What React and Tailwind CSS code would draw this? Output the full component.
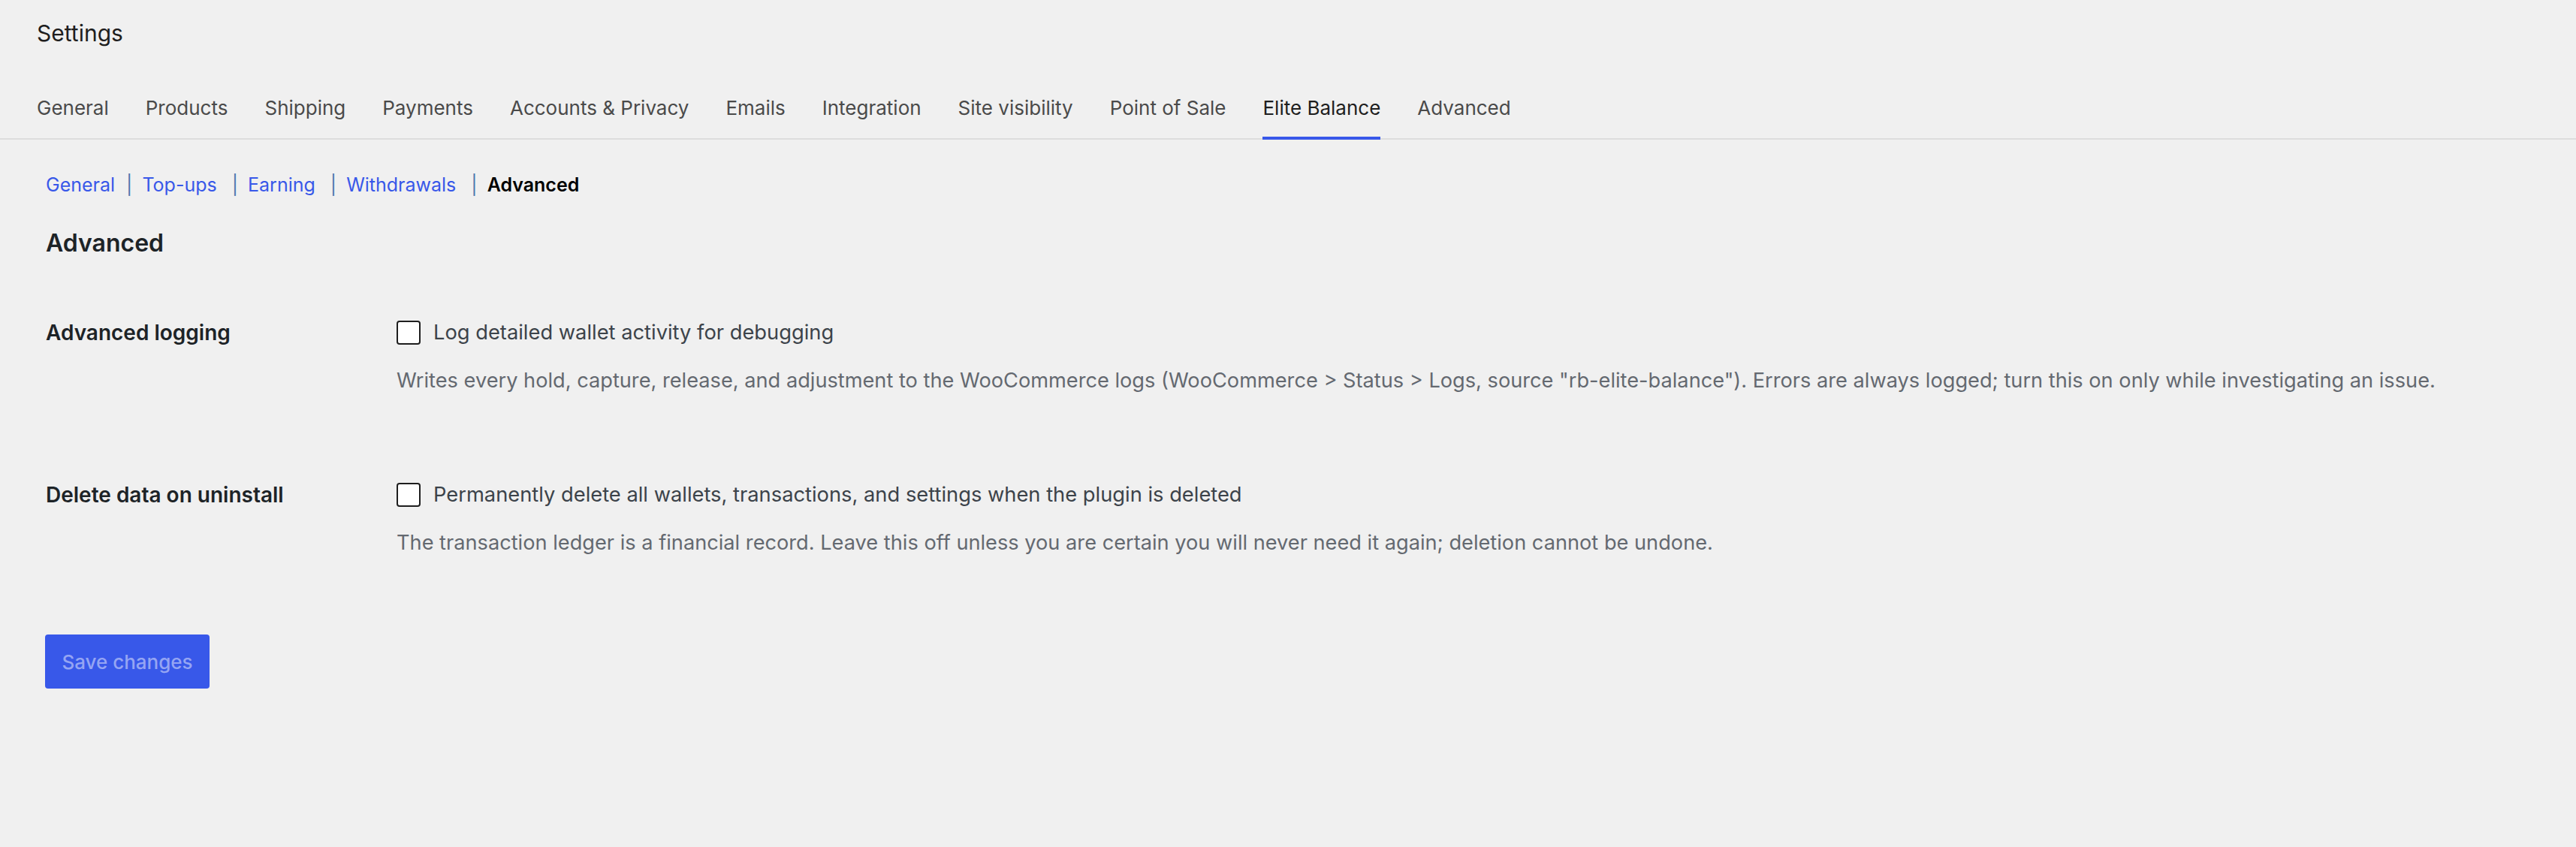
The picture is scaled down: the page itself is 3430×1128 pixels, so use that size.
import React from 'react';

const tabs = [
  'General',
  'Products',
  'Shipping',
  'Payments',
  'Accounts & Privacy',
  'Emails',
  'Integration',
  'Site visibility',
  'Point of Sale',
  'Elite Balance',
  'Advanced',
];

const sections = ['General', 'Top-ups', 'Earning', 'Withdrawals'];

// Setting row: label on the left, checkbox + help text on the right
const SettingRow = ({ label, checkLabel, help, className = '' }) => (
  <div className={`flex ${className}`}>
    <div className="w-[467px] shrink-0 text-[28px] leading-[32px] font-semibold text-[#1d2327]">
      {label}
    </div>
    <div className="flex flex-col">
      <label className="flex items-center h-[32px]">
        <span className="w-[32px] h-[32px] shrink-0 rounded-[4px] border-2 border-[#1e1e1e] bg-white" />
        <span className="ml-[17px] text-[27.3px] leading-[32px] text-[#3c434a]">{checkLabel}</span>
      </label>
      <p className="mt-[32px] text-[27.2px] leading-[32px] text-[#646970]">{help}</p>
    </div>
  </div>
);

const App = () => {
  return (
    <div
      className="min-h-[1128px] w-full bg-[#f0f0f0]"
      style={{ fontFamily: 'Inter, "Noto Sans", sans-serif' }}
    >
      {/* header */}
      <div className="pt-[26px] pl-[49px]">
        <h1 className="text-[30px] leading-[36px] font-normal text-[#1e1e1e]">Settings</h1>
      </div>

      {/* top tabs */}
      <nav className="mt-[66px] pl-[49px] flex gap-[49px] border-b-2 border-[#dddddd]">
        {tabs.map((t) => (
          <a
            key={t}
            className={`text-[26px] leading-[32px] pb-[22px] -mb-[2px] border-b-4 whitespace-nowrap ${
              t === 'Elite Balance'
                ? 'border-[#3858e9] text-[#1e1e1e]'
                : 'border-transparent text-[#4a4a4a]'
            }`}
          >
            {t}
          </a>
        ))}
      </nav>

      <div className="pl-[61px]">
        {/* sub sections */}
        <div className="mt-[44px] flex items-center text-[25px] leading-[32px]">
          {sections.map((s, i) => (
            <React.Fragment key={s}>
              <a className="text-[#3858e9]">{s}</a>
              <span className={`${i === 0 ? 'ml-[15px]' : 'ml-[20px]'} mr-[13px] text-[#4f77ad]`}>|</span>
            </React.Fragment>
          ))}
          <span className="font-semibold text-black">Advanced</span>
        </div>

        <h2 className="mt-[42px] text-[32px] leading-[40px] font-semibold text-[#1d2327]">Advanced</h2>

        <SettingRow
          className="mt-[83px]"
          label="Advanced logging"
          checkLabel="Log detailed wallet activity for debugging"
          help={'Writes every hold, capture, release, and adjustment to the WooCommerce logs (WooCommerce > Status > Logs, source "rb-elite-balance"). Errors are always logged; turn this on only while investigating an issue.'}
        />

        <SettingRow
          className="mt-[120px]"
          label="Delete data on uninstall"
          checkLabel="Permanently delete all wallets, transactions, and settings when the plugin is deleted"
          help="The transaction ledger is a financial record. Leave this off unless you are certain you will never need it again; deletion cannot be undone."
        />

        <button
          disabled
          className="mt-[106px] ml-[-1px] h-[72px] w-[219px] rounded-[4px] bg-[#3858e9] text-[26px] font-medium text-[#95a5f3]"
        >
          Save changes
        </button>
      </div>
    </div>
  );
};

export default App;
